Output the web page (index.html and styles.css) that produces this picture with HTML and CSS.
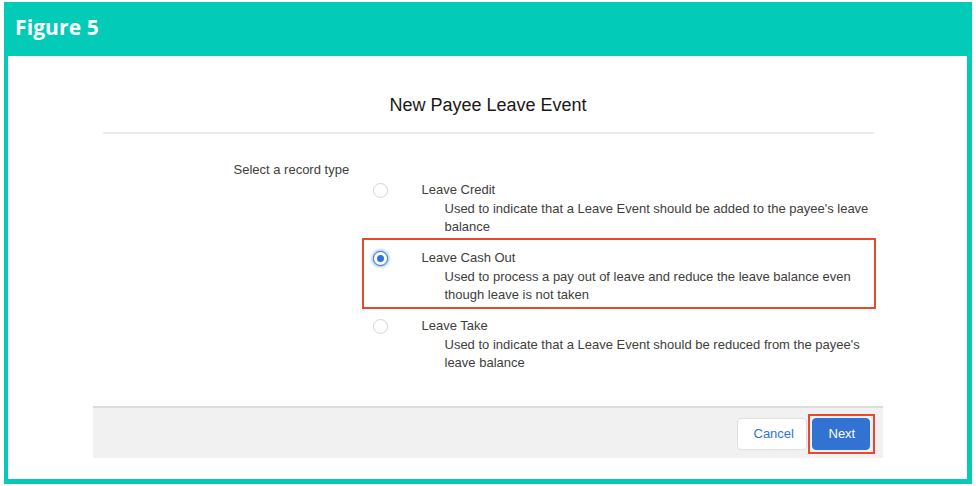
FILE: index.html
```html
<!DOCTYPE html>
<html lang="en">
<head>
<meta charset="utf-8">
<title>Figure 5</title>
<link rel="stylesheet" href="styles.css">
</head>
<body>
<div class="frame">
  <header class="figure-head">Figure 5</header>
  <div class="figure-body">
    <div class="modal">
      <div class="modal-header">
        <h2 class="modal-title">New Payee Leave Event</h2>
      </div>
      <div class="modal-content">
        <div class="legend">Select a record type</div>
        <div class="options">
          <div class="option">
            <span class="radio"></span>
            <div class="option-text">
              <div class="option-label">Leave Credit</div>
              <div class="option-desc">Used to indicate that a Leave Event should be added to the payee's leave balance</div>
            </div>
          </div>
          <div class="option option-highlight">
            <span class="radio radio-checked"></span>
            <div class="option-text">
              <div class="option-label">Leave Cash Out</div>
              <div class="option-desc">Used to process a pay out of leave and reduce the leave balance even though leave is not taken</div>
            </div>
            <span class="annot annot-row"></span>
          </div>
          <div class="option">
            <span class="radio"></span>
            <div class="option-text">
              <div class="option-label">Leave Take</div>
              <div class="option-desc">Used to indicate that a Leave Event should be reduced from the payee's leave balance</div>
            </div>
          </div>
        </div>
      </div>
      <div class="modal-footer">
        <button class="btn btn-neutral">Cancel</button>
        <span class="btn-wrap">
          <button class="btn btn-brand">Next</button>
          <span class="annot annot-btn"></span>
        </span>
      </div>
    </div>
  </div>
</div>
</body>
</html>
```

FILE: styles.css
```css
* { box-sizing: border-box; }

html, body {
  margin: 0;
  padding: 0;
  background: #ffffff;
}

body {
  width: 976px;
  height: 486px;
  overflow: hidden;
  font-family: "Liberation Sans", Arial, sans-serif;
  color: #3e3e3c;
}

.frame {
  margin: 2px 4px 0 4px;
  height: 482px;
  display: flex;
  flex-direction: column;
  background: #02cbb8;
}

.figure-head {
  height: 54px;
  padding: 11px 0 0 11px;
  font-family: "Open Sans", "DejaVu Sans", sans-serif;
  font-weight: 700;
  font-size: 21px;
  line-height: 28px;
  color: #ffffff;
  letter-spacing: 0.1px;
}

.figure-body {
  flex: 1;
  margin: 0 5px 5px 4px;
  background: #ffffff;
  padding-top: 37px;
}

.modal {
  width: 790px;
  margin: 0 auto;
}

.modal-header {
  margin: 0 9px 0 10px;
  padding-bottom: 15px;
  border-bottom: 2px solid #ececec;
  text-align: center;
}

.modal-title {
  margin: 0;
  font-weight: 400;
  font-size: 18px;
  line-height: 24px;
  color: #181818;
}

.modal-content {
  padding: 27px 0 34px 0;
  font-size: 13px;
}

.legend {
  margin-left: 141px;
  line-height: 18px;
  height: 19px;
}

.options {
  margin-left: 280px;
  display: flex;
  flex-direction: column;
  gap: 12px;
}

.option {
  display: flex;
  align-items: flex-start;
  position: relative;
}

.radio {
  flex: none;
  width: 15px;
  height: 15px;
  margin-top: 3px;
  margin-right: 34px;
  border-radius: 50%;
  border: 1px solid #d4d4d4;
  background: #ffffff;
  position: relative;
}

.radio-checked {
  border-color: #2e74d6;
  box-shadow: 0 0 3px 1px rgba(46, 116, 214, 0.55);
}

.radio-checked::after {
  content: "";
  position: absolute;
  left: 3px;
  top: 3px;
  width: 7px;
  height: 7px;
  border-radius: 50%;
  background: #2e74d6;
}

.option-text {
  width: 451px;
}

.option-label {
  line-height: 20px;
  color: #3e3e3c;
}

.option-desc {
  margin-left: 23px;
  line-height: 18px;
  color: #3e3e3c;
}

.annot {
  position: absolute;
  border: 2px solid #e9472f;
  pointer-events: none;
}

.annot-row {
  top: -10px;
  left: -11px;
  width: 514px;
  height: 71px;
}

.modal-footer {
  border-top: 2px solid #dddddd;
  background: #f1f1f1;
  padding: 10px 13px 8px 0;
  display: flex;
  justify-content: flex-end;
  align-items: center;
  gap: 5px;
  height: 52px;
}

.btn {
  font-family: "Liberation Sans", Arial, sans-serif;
  font-size: 13px;
  height: 32px;
  line-height: 30px;
  padding: 0 16px;
  border-radius: 4px;
  margin: 0;
  cursor: pointer;
}

.btn-neutral {
  width: 70px;
  background: #ffffff;
  border: 1px solid #e0e0e0;
  color: #2e74d6;
}

.btn-brand {
  width: 58px;
  background: #3172d3;
  border: 1px solid #3172d3;
  color: #ffffff;
}

.btn-wrap {
  position: relative;
  display: flex;
}

.annot-btn {
  top: -4px;
  left: -4px;
  right: -5px;
  bottom: -4px;
}
```
